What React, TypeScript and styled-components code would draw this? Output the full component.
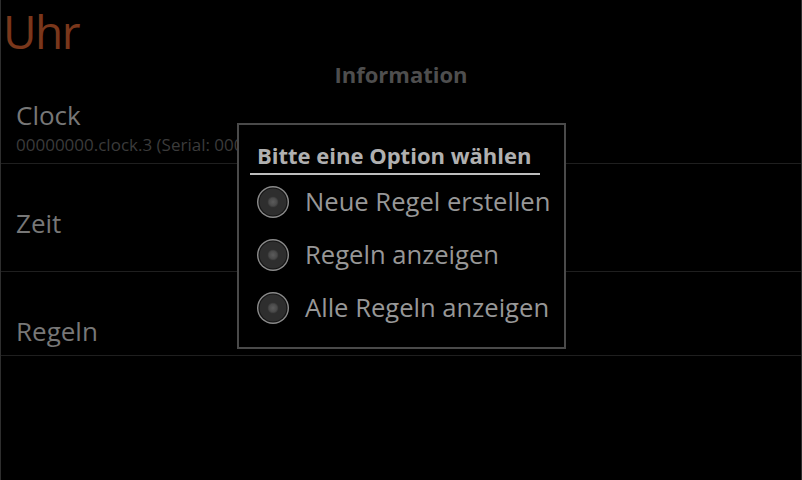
import styled, {createGlobalStyle} from "styled-components";

const GlobalStyle = createGlobalStyle`
  html, body {
    margin: 0;
    padding: 0;
    background: #000;
  }
  body {
    font-family: "Open Sans", "DejaVu Sans", sans-serif;
  }
`;

const Screen = styled.div`
  position: relative;
  width: 802px;
  height: 480px;
  box-sizing: border-box;
  background: #000;
  border-left: 1px solid #2e2e2e;
  border-right: 1px solid #2e2e2e;
  display: flex;
  flex-direction: column;
  overflow: hidden;
`;

const AppTitle = styled.h1`
  margin: 0;
  padding-left: 2px;
  font-size: 46px;
  line-height: 62px;
  letter-spacing: -1.5px;
  font-weight: 400;
  color: #7a371b;
`;

const SectionHeader = styled.h2`
  margin: 0;
  font-size: 22px;
  line-height: 24px;
  font-weight: 700;
  text-align: center;
  color: #4e4e4e;
`;

const ListItem = styled.div<{$top: number}>`
  padding: ${(p) => p.$top}px 0 8px 15px;
  border-bottom: 1px solid #1f1f1f;
`;

const ItemTitle = styled.div`
  font-size: 26px;
  line-height: 31px;
  color: #777;
`;

const ItemSummary = styled.div`
  height: 24px;
  font-size: 17px;
  line-height: 27px;
  color: #3b3b3b;
  white-space: nowrap;
`;

const Dialog = styled.div`
  position: absolute;
  left: 236px;
  top: 123px;
  width: 329px;
  height: 226px;
  box-sizing: border-box;
  background: #000;
  border: 2px solid #4a4a4a;
  display: flex;
  flex-direction: column;
`;

const DialogTitle = styled.div`
  margin: 17px 24px 0 11px;
  padding: 0 0 5px 7px;
  border-bottom: 2px solid #bdbdbd;
  font-size: 22px;
  line-height: 26px;
  font-weight: 700;
  color: #b0b0b0;
  white-space: nowrap;
`;

const OptionList = styled.div`
  display: flex;
  flex-direction: column;
`;

const Option = styled.label`
  height: 53px;
  display: flex;
  align-items: center;
  gap: 15px;
  padding-left: 17px;
  font-size: 25.6px;
  color: #979797;
  white-space: nowrap;
`;

const RadioIcon = () => (
  <svg width="34" height="34" viewBox="0 0 34 34">
    <defs>
      <radialGradient id="rdot" cx="50%" cy="50%" r="50%">
        <stop offset="0%" stopColor="#5c5c5c" />
        <stop offset="70%" stopColor="#4a4a4a" />
        <stop offset="100%" stopColor="#333" />
      </radialGradient>
    </defs>
    <circle cx="17" cy="17" r="16" fill="#8a8a8a" />
    <circle cx="17" cy="17" r="14.6" fill="#141414" />
    <circle cx="17" cy="17" r="13.4" fill="#2e2e2e" />
    <circle cx="17" cy="17" r="5.5" fill="url(#rdot)" />
  </svg>
);

const options = ["Neue Regel erstellen", "Regeln anzeigen", "Alle Regeln anzeigen"];

export default function App() {
  return (
    <Screen>
      <GlobalStyle />
      <AppTitle>Uhr</AppTitle>
      <SectionHeader>Information</SectionHeader>
      <ListItem $top={14}>
        <ItemTitle>Clock</ItemTitle>
        <ItemSummary>00000000.clock.3 (Serial: 00000000)</ItemSummary>
      </ListItem>
      <ListItem $top={44}>
        <ItemTitle>Zeit</ItemTitle>
        <ItemSummary />
      </ListItem>
      <ListItem $top={44}>
        <ItemTitle>Regeln</ItemTitle>
      </ListItem>

      <Dialog>
        <DialogTitle>Bitte eine Option wählen</DialogTitle>
        <OptionList>
          {options.map((o) => (
            <Option key={o}>
              <RadioIcon />
              {o}
            </Option>
          ))}
        </OptionList>
      </Dialog>
    </Screen>
  );
}
